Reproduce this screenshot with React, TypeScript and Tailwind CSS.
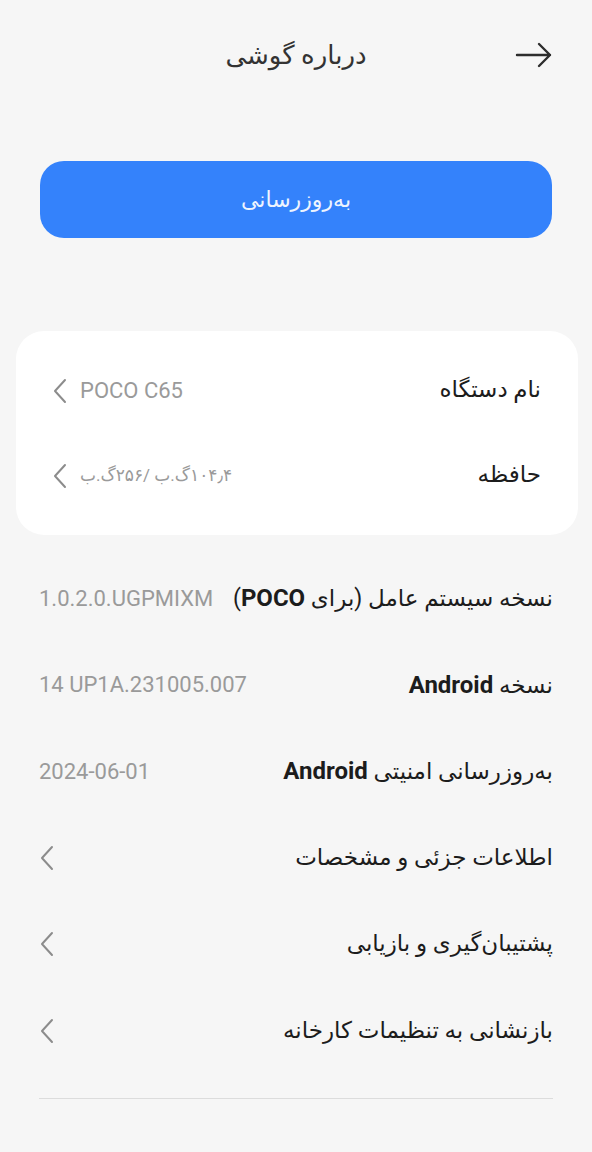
import { ReactNode } from "react";

const font = { fontFamily: 'Roboto, "DejaVu Sans", sans-serif' };

function Chevron({ className = "" }: { className?: string }) {
  return (
    <svg width="16" height="26" viewBox="0 0 16 26" fill="none" className={className}>
      <path d="M13 2L3 13l10 11" stroke="currentColor" strokeWidth="2" strokeLinecap="round" strokeLinejoin="round" />
    </svg>
  );
}

function Row({
  label,
  value,
  arrow,
  valueClass = "text-[22px]",
}: {
  label: ReactNode;
  value?: string;
  arrow?: boolean;
  valueClass?: string;
}) {
  return (
    <div className="flex h-[86.5px] items-center justify-between">
      <span className="text-[23px] text-[#1c1c1c]">{label}</span>
      <span className="flex items-center gap-3 text-[#9a9a9a]">
        {value && (
          <span dir="auto" className={valueClass}>
            {value}
          </span>
        )}
        {arrow && <Chevron className="text-[#8c8c8c]" />}
      </span>
    </div>
  );
}

const cardRows = [
  { label: "نام دستگاه", value: "POCO C65", cls: "text-[22px]" },
  { label: "حافظه", value: "۱۰۴٫۴گ.ب /۲۵۶گ.ب", cls: "text-[17px]" },
];

export default function App() {
  return (
    <div dir="rtl" className="min-h-[1152px] w-full bg-[#f6f6f6]" style={font}>
      {/* top bar */}
      <header className="grid h-[110px] grid-cols-[1fr_auto_1fr] items-center px-[39px]">
        <div className="flex justify-start">
          <svg width="38" height="26" viewBox="0 0 38 26" fill="none" className="text-[#2d2d2d]">
            <path d="M2 13h33M24 2l11 11-11 11" stroke="currentColor" strokeWidth="2.4" strokeLinecap="round" strokeLinejoin="round" />
          </svg>
        </div>
        <h1 className="text-[26px] text-[#333]">درباره گوشی</h1>
        <div />
      </header>

      <div className="mt-[51px] px-10">
        <button className="flex h-[77px] w-full items-center justify-center rounded-[24px] bg-[#3482fb] text-[22px] text-[#eef4ff]">
          به‌روزرسانی
        </button>
      </div>

      {/* device card */}
      <div className="ml-4 mr-[14px] mt-[93px] rounded-[28px] bg-white py-[17px] pl-[36px] pr-[37px]">
        {cardRows.map((r) => (
          <div key={r.label} className="flex h-[85px] items-center justify-between">
            <span className="text-[23px] text-[#1c1c1c]">{r.label}</span>
            <span className="flex items-center gap-3 text-[#9a9a9a]">
              <span dir="auto" className={r.cls}>
                {r.value}
              </span>
              <Chevron className="text-[#8c8c8c]" />
            </span>
          </div>
        ))}
      </div>

      <div className="mt-5 px-[39px]">
        <Row
          label={
            <>
              نسخه سیستم عامل (برای <b className="text-[24px] font-bold">POCO</b>)
            </>
          }
          value="1.0.2.0.UGPMIXM"
        />
        <Row
          label={
            <>
              نسخه <b className="text-[24px] font-bold">Android</b>
            </>
          }
          value="14 UP1A.231005.007"
        />
        <Row
          label={
            <>
              به‌روزرسانی امنیتی <b className="text-[24px] font-bold">Android</b>
            </>
          }
          value="2024-06-01"
        />
        <Row label="اطلاعات جزئی و مشخصات" arrow />
        <Row label="پشتیبان‌گیری و بازیابی" arrow />
        <Row label="بازنشانی به تنظیمات کارخانه" arrow />
        <div className="mt-6 h-px bg-[#dcdcdc]" />
      </div>
    </div>
  );
}
